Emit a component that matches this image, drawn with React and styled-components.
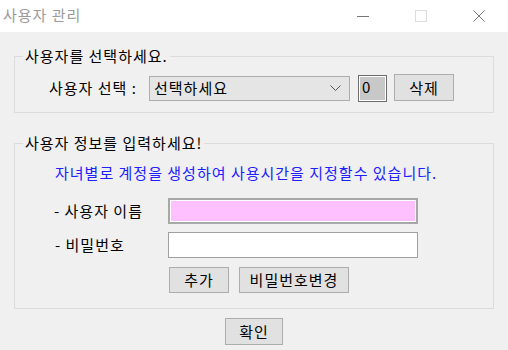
import React from "react";
import styled, { createGlobalStyle } from "styled-components";

const Global = createGlobalStyle`
  html, body { margin: 0; padding: 0; }
  body {
    background: #f0f0f0;
    font-family: "Noto Sans CJK KR", "Noto Sans", sans-serif;
    font-size: 15px;
    letter-spacing: 1px;
    color: #000;
  }
`;

const Window = styled.div`
  width: 508px;
  height: 350px;
  background: #f0f0f0;
  display: flex;
  flex-direction: column;
  overflow: hidden;
`;

const TitleBar = styled.div`
  height: 32px;
  background: #fff;
  display: flex;
  align-items: center;
  padding-left: 3px;
  box-sizing: border-box;
`;

const TitleText = styled.span`
  flex: 1;
  color: #9a9a9a;
  font-size: 15px;
  line-height: 20px;
  margin-top: -3px;
`;

const Ctrl = styled.div`
  width: 58px;
  height: 32px;
  display: flex;
  align-items: center;
  justify-content: center;
`;

const Group = styled.fieldset`
  margin: ${(p) => p.$top}px 14px 0 14px;
  padding: 0;
  border: 1px solid #dcdcdc;
  min-inline-size: auto;
`;

const Legend = styled.legend`
  margin-left: 8px;
  padding: 0 2px;
  line-height: 20px;
  font-size: 15px;
`;

const GroupBody = styled.div`
  padding: ${(p) => p.$pad};
  display: flex;
  flex-direction: column;
`;

const Row = styled.div`
  display: flex;
  align-items: center;
  gap: ${(p) => p.$gap || 0}px;
  margin-top: ${(p) => p.$mt || 0}px;
  padding-left: ${(p) => p.$pl || 0}px;
`;

const Label = styled.span`
  width: ${(p) => p.$w}px;
  line-height: 20px;
  white-space: nowrap;
  flex-shrink: 0;
`;

const Combo = styled.div`
  width: 201px;
  height: 25px;
  box-sizing: border-box;
  border: 1px solid #adadad;
  background: #e5e5e5;
  display: flex;
  align-items: center;
  justify-content: space-between;
  padding: 0 8px 0 4px;
  margin-right: 8px;
  line-height: 20px;
`;

const CountBox = styled.div`
  width: 29px;
  height: 27px;
  box-sizing: border-box;
  border: 1px solid #6d6d6d;
  box-shadow: inset 0 0 0 1px #fff;
  background: #c8c8c8;
  padding: 1px 3px;
  line-height: 20px;
  font-size: 15px;
  margin-right: 7px;
`;

const Button = styled.div`
  width: ${(p) => p.$w}px;
  height: ${(p) => p.$h || 27}px;
  box-sizing: border-box;
  border: 1px solid #adadad;
  background: #e1e1e1;
  display: flex;
  align-items: center;
  justify-content: center;
  line-height: 20px;
  margin-top: ${(p) => p.$mt || 0}px;
  margin-bottom: ${(p) => p.$mb || 0}px;
`;

const Notice = styled.div`
  color: #2020ff;
  line-height: 20px;
  padding-left: 40px;
  white-space: nowrap;
`;

const Input = styled.div`
  width: 250px;
  height: 26px;
  box-sizing: border-box;
  background: ${(p) => (p.$pink ? "#ffc0ff" : "#fff")};
  border: ${(p) => (p.$pink ? "2px solid #a8a8a8" : "1px solid #a0a0a0")};
  box-shadow: ${(p) => (p.$pink ? "inset 0 0 0 1px #fff" : "none")};
`;

const Footer = styled.div`
  display: flex;
  justify-content: center;
  margin-top: 9px;
`;

export default function App() {
  return (
    <>
      <Global />
      <Window>
        <TitleBar>
          <TitleText>사용자 관리</TitleText>
          <Ctrl>
            <svg width="12" height="12" viewBox="0 0 12 12">
              <line x1="0" y1="6.5" x2="12" y2="6.5" stroke="#777" strokeWidth="1" />
            </svg>
          </Ctrl>
          <Ctrl>
            <svg width="12" height="12" viewBox="0 0 12 12">
              <rect x="0.5" y="0.5" width="11" height="11" fill="none" stroke="#ddd" strokeWidth="1" />
            </svg>
          </Ctrl>
          <Ctrl>
            <svg width="12" height="12" viewBox="0 0 12 12">
              <path d="M0.5 0.5 L11.5 11.5 M11.5 0.5 L0.5 11.5" stroke="#777" strokeWidth="1" fill="none" />
            </svg>
          </Ctrl>
        </TitleBar>

        <Group $top={14}>
          <Legend>사용자를 선택하세요.</Legend>
          <GroupBody $pad="8px 0 10px 34px">
            <Row>
              <Label $w={100}>사용자 선택 :</Label>
              <Combo>
                <span>선택하세요</span>
                <svg width="11" height="6" viewBox="0 0 11 6">
                  <path d="M0.5 0.5 L5.5 5.5 L10.5 0.5" fill="none" stroke="#555" strokeWidth="1" />
                </svg>
              </Combo>
              <CountBox>0</CountBox>
              <Button $w={60} $mb={1}>삭제</Button>
            </Row>
          </GroupBody>
        </Group>

        <Group $top={20}>
          <Legend>사용자 정보를 입력하세요!</Legend>
          <GroupBody $pad="10px 0 15px 0">
            <Notice>자녀별로 계정을 생성하여 사용시간을 지정할수 있습니다.</Notice>
            <Row $mt={15} $pl={39}>
              <Label $w={114}>- 사용자 이름</Label>
              <Input $pink />
            </Row>
            <Row $mt={8} $pl={40}>
              <Label $w={113}>- 비밀번호</Label>
              <Input />
            </Row>
            <Row $mt={9} $pl={154} $gap={10}>
              <Button $w={60} $h={26}>추가</Button>
              <Button $w={110} $h={26}>비밀번호변경</Button>
            </Row>
          </GroupBody>
        </Group>

        <Footer>
          <Button $w={58}>확인</Button>
        </Footer>
      </Window>
    </>
  );
}
